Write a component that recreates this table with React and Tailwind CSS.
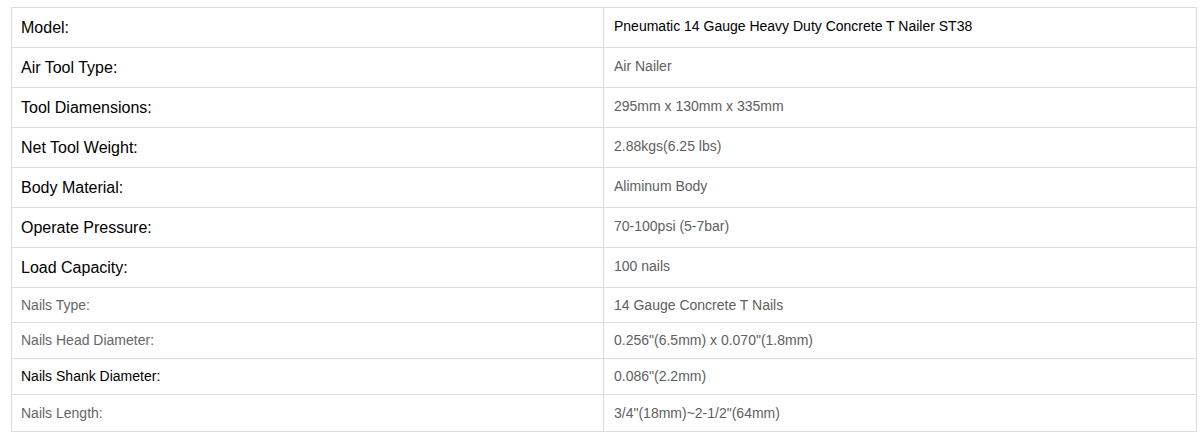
const specs = [
  { label: 'Model:', value: 'Pneumatic 14 Gauge Heavy Duty Concrete T Nailer ST38', h: 'h-[40px]', big: true, dark: true },
  { label: 'Air Tool Type:', value: 'Air Nailer', h: 'h-[40px]', big: true },
  { label: 'Tool Diamensions:', value: '295mm x 130mm x 335mm', h: 'h-[40px]', big: true },
  { label: 'Net Tool Weight:', value: '2.88kgs(6.25 lbs)', h: 'h-[40px]', big: true },
  { label: 'Body Material:', value: 'Aliminum Body', h: 'h-[40px]', big: true },
  { label: 'Operate Pressure:', value: '70-100psi (5-7bar)', h: 'h-[40px]', big: true },
  { label: 'Load Capacity:', value: '100 nails', h: 'h-[40px]', big: true },
  { label: 'Nails Type:', value: '14 Gauge Concrete T Nails', h: 'h-[35px]' },
  { label: 'Nails Head Diameter:', value: '0.256"(6.5mm) x 0.070"(1.8mm)', h: 'h-[36px]' },
  { label: 'Nails Shank Diameter:', value: '0.086"(2.2mm)', h: 'h-[36px]', labelDark: true },
  { label: 'Nails Length:', value: '3/4"(18mm)~2-1/2"(64mm)', h: 'h-[36px]', last: true },
]

export default function App() {
  return (
    <div className="min-h-[446px] w-[1204px] bg-white pl-[11px] pt-[7px] font-['Liberation_Sans',Arial,sans-serif]">
      <div className="w-[1186px] border border-[#ddd]">
        {specs.map((row) => (
          <div key={row.label} className={`flex ${row.h} ${row.last ? '' : 'border-b border-[#ddd]'}`}>
            <div
              className={`flex w-[592px] items-center border-r border-[#ddd] pl-[9px] ${
                row.big ? 'text-[16px] text-black' : row.labelDark ? 'text-[14px] text-black' : 'text-[14px] text-[#666]'
              }`}
            >
              {row.label}
            </div>
            <div
              className={`flex flex-1 items-center pl-[10px] text-[14px] ${row.big ? 'pb-[3px]' : ''} ${
                row.dark ? 'text-black' : 'text-[#606060]'
              }`}
            >
              {row.value}
            </div>
          </div>
        ))}
      </div>
    </div>
  )
}
